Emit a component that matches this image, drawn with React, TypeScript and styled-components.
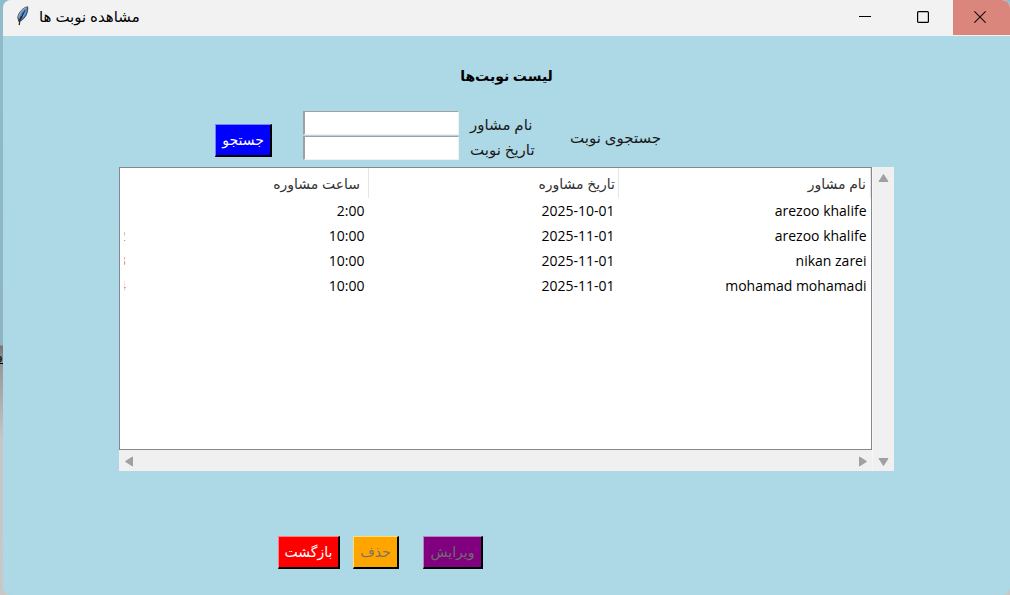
import React from "react";
import styled, { createGlobalStyle } from "styled-components";

const GlobalStyle = createGlobalStyle`
  * { box-sizing: border-box; }
  body {
    margin: 0;
    overflow: hidden;
    font-family: "Open Sans", "DejaVu Sans", sans-serif;
    font-size: 14px;
    line-height: 24px;
    color: #1a1a1a;
  }
`;

const Desktop = styled.div`
  position: relative;
  min-height: 100vh;
  padding-left: 3px;
  display: flex;
  background: linear-gradient(#8fbccb 0, #8fb4c2 345px, #777 346px, #999 366px, #c8c6c6 440px, #c8c8c8 100%);
`;

const Behind = styled.span`
  position: absolute;
  left: 0;
  top: 346px;
  width: 3px;
  height: 18px;
  overflow: hidden;
  direction: rtl;
  line-height: 18px;
  border-bottom: 1px solid #000;
`;

const Window = styled.div`
  flex: 1;
  display: flex;
  flex-direction: column;
  background: #add8e6;
  border-radius: 8px;
  overflow: hidden;
`;

const TitleBar = styled.header`
  height: 36px;
  display: flex;
  background: #f2f2f2;
  color: #000;
`;

const Caption = styled.div`
  flex: 1;
  display: flex;
  align-items: center;
  gap: 8px;
  padding: 0 0 4px 12px;
  font-size: 15px;
`;

const WindowButton = styled.button<{ $close?: boolean }>`
  width: ${(p) => (p.$close ? 57 : 58)}px;
  height: 35px;
  padding: 0 3px 2px 0;
  display: flex;
  align-items: center;
  justify-content: center;
  border: 0;
  background: ${(p) => (p.$close ? "#da867c" : "transparent")};
`;

const Content = styled.main`
  width: 775px;
  max-width: 100%;
  margin: 0 auto;
  display: flex;
  flex-direction: column;
`;

const Heading = styled.h1`
  margin: 28px 0 22px;
  font-size: 14px;
  line-height: 24px;
  font-weight: 700;
  text-align: center;
  color: #000;
`;

const SearchForm = styled.form`
  display: flex;
  align-items: flex-end;
  padding-left: 96px;
  margin-bottom: 7px;
`;

const Fields = styled.div`
  display: grid;
  grid-template-columns: 156px 65px;
  column-gap: 11px;
  row-gap: 1px;
  margin: 1px 35px 0 31px;
`;

const Field = styled.input`
  width: 100%;
  height: 24px;
  padding: 0 4px;
  font: inherit;
  background: #fff;
  border: 2px solid;
  border-color: #a0a0a0 #f0f0f0 #f0f0f0 #a0a0a0;
  border-width: 1px 1px 1px 2px;
  outline: 0;
`;

const FieldLabel = styled.label`
  direction: rtl;
  justify-self: start;
  font-size: 15px;
  line-height: 26px;
  height: 24px;
  white-space: nowrap;
`;

const FormCaption = styled.span`
  font-size: 15px;
  align-self: center;
  padding-top: 4px;
`;

const SubmitSlot = styled.div`
  display: flex;
  padding-bottom: 3px;
`;

const Button = styled.button<{ $bg: string; $fg: string; $edge: string; $width: number }>`
  width: ${(p) => p.$width}px;
  height: 33px;
  padding: 0;
  font: inherit;
  white-space: nowrap;
  color: ${(p) => p.$fg};
  background: ${(p) => p.$bg};
  border: 2px solid;
  border-color: ${(p) => p.$edge} #000 #000 ${(p) => p.$edge};
  border-width: 1px 2px 2px 1px;
`;

const ListBox = styled.section`
  display: grid;
  grid-template-columns: 1fr 21px;
  grid-template-rows: 283px 21px;
  column-gap: 1px;
  background: #f6f6f6;
`;

const Pane = styled.div`
  background: #fff;
  border: 1px solid #828790;
  overflow: hidden;
`;

const Table = styled.table`
  width: 100%;
  table-layout: fixed;
  border-collapse: collapse;
  direction: rtl;
  color: #000;
`;

const HeadCell = styled.th<{ $width: string; $pad?: number }>`
  width: ${(p) => p.$width};
  height: 30px;
  padding: 1px ${(p) => p.$pad ?? 4}px 0 0;
  font-weight: 400;
  text-align: right;
  color: #333;
  border-right: 1px solid #e5e5e5;
`;

const Cell = styled.td`
  height: 25px;
  padding: 0 4px 0 0;
  text-align: right;
  white-space: nowrap;
`;

const IdCell = styled(Cell)`
  padding: 0 0 0 4px;
`;

const IdSliver = styled.span`
  display: block;
  width: 2px;
  height: 24px;
  margin-right: auto;
  overflow: hidden;
  color: #e8963c;
`;

const Track = styled.div<{ $vertical?: boolean }>`
  display: flex;
  flex-direction: ${(p) => (p.$vertical ? "column" : "row")};
  justify-content: space-between;
  align-items: center;
  padding: ${(p) => (p.$vertical ? "6px 0 4px" : "2px 4px 0 5px")};
  grid-row: ${(p) => (p.$vertical ? "1 / 3" : "auto")};
  grid-column: ${(p) => (p.$vertical ? "2" : "1")};
  background: #f0f0f0;
`;

const ArrowButton = styled.button`
  width: 11px;
  height: 11px;
  padding: 0;
  border: 0;
  background: none;
  display: flex;
`;

const Actions = styled.div`
  display: flex;
  padding: 65px 0 26px 159px;
`;

const ActionGap = styled.span<{ $size: number }>`
  width: ${(p) => p.$size}px;
`;

const arrows = {
  up: "M5.5 1.5 10 8.5H1Z",
  down: "M1 2.5H10L5.5 9.5Z",
  left: "M1.5 5.5 8.5 1V10Z",
  right: "M9.5 5.5 2.5 1V10Z",
};

function Arrow({ dir, label }: { dir: keyof typeof arrows; label: string }) {
  return (
    <ArrowButton type="button" aria-label={label}>
      <svg width="11" height="11" viewBox="0 0 11 11">
        <path d={arrows[dir]} fill="#a0a0a0" stroke="#a0a0a0" strokeLinejoin="round" />
      </svg>
    </ArrowButton>
  );
}

function Feather() {
  return (
    <svg width="16" height="20" viewBox="0 0 16 20">
      <path d="M12.5 .8C8 1.6 4 6 2.8 11.2L3.8 15.6C9 13.8 12.6 9 12.8 2Z" fill="#3f7fcc" stroke="#3a434e" strokeWidth="1" />
      <path d="M11.6 1.8C8 3.2 5 7 3.8 11.6" fill="none" stroke="#98a0a8" strokeWidth="1.6" />
      <path d="M10.4 4.5 6.2 12M4.6 14.5 6.6 10.5M7.6 9 8.6 7" fill="none" stroke="#101820" strokeWidth="1.2" />
      <path d="M6.2 10.5 5 14 4.2 19.2" fill="none" stroke="#303030" strokeWidth="1.3" />
      <path d="M11.2 4.5 8 11" fill="none" stroke="#5c9be0" strokeWidth="1.6" />
    </svg>
  );
}

const rows = [
  { id: "1", name: "arezoo khalife", date: "2025-10-01", time: "2:00" },
  { id: "2", name: "arezoo khalife", date: "2025-11-01", time: "10:00" },
  { id: "3", name: "nikan zarei", date: "2025-11-01", time: "10:00" },
  { id: "4", name: "mohamad mohamadi", date: "2025-11-01", time: "10:00" },
];

export default function App() {
  return (
    <Desktop>
      <GlobalStyle />
      <Behind aria-hidden="true">و</Behind>
      <Window>
        <TitleBar>
          <Caption>
            <Feather />
            <span dir="rtl">مشاهده نوبت ها</span>
          </Caption>
          <WindowButton type="button" aria-label="Minimize">
            <svg width="12" height="12" viewBox="0 0 12 12"><path d="M0 5.5H12" stroke="#000" /></svg>
          </WindowButton>
          <WindowButton type="button" aria-label="Maximize">
            <svg width="12" height="12" viewBox="0 0 12 12"><rect x=".6" y=".6" width="10.8" height="10.8" rx="1" fill="none" stroke="#000" strokeWidth="1.2" /></svg>
          </WindowButton>
          <WindowButton type="button" aria-label="Close" $close>
            <svg width="12" height="12" viewBox="0 0 12 12"><path d="M.3.3 11.7 11.7M11.7.3.3 11.7" stroke="#111" strokeWidth="1.1" /></svg>
          </WindowButton>
        </TitleBar>

        <Content>
          <Heading dir="rtl">لیست نوبت‌ها</Heading>

          <SearchForm onSubmit={(e) => e.preventDefault()}>
            <SubmitSlot>
              <Button type="submit" $bg="#0000ff" $fg="#fff" $edge="#8080ff" $width={57}>جستجو</Button>
            </SubmitSlot>
            <Fields>
              <Field id="advisor" dir="rtl" />
              <FieldLabel htmlFor="advisor">نام مشاور</FieldLabel>
              <Field id="date" dir="rtl" />
              <FieldLabel htmlFor="date">تاریخ نوبت</FieldLabel>
            </Fields>
            <FormCaption dir="rtl">جستجوی نوبت</FormCaption>
          </SearchForm>

          <ListBox>
            <Pane>
              <Table>
                <thead>
                  <tr>
                    <HeadCell scope="col" $width="252px">نام مشاور</HeadCell>
                    <HeadCell scope="col" $width="250px" $pad={3}>تاریخ مشاوره</HeadCell>
                    <HeadCell scope="col" $width="auto" $pad={8}>ساعت مشاوره</HeadCell>
                    <td width="8" />
                  </tr>
                </thead>
                <tbody>
                  {rows.map((r) => (
                    <tr key={r.id}>
                      <Cell>{r.name}</Cell>
                      <Cell>{r.date}</Cell>
                      <Cell>{r.time}</Cell>
                      <IdCell><IdSliver>{r.id}</IdSliver></IdCell>
                    </tr>
                  ))}
                </tbody>
              </Table>
            </Pane>
            <Track $vertical>
              <Arrow dir="up" label="Scroll up" />
              <Arrow dir="down" label="Scroll down" />
            </Track>
            <Track>
              <Arrow dir="left" label="Scroll left" />
              <Arrow dir="right" label="Scroll right" />
            </Track>
          </ListBox>

          <Actions>
            <Button type="button" $bg="#ff0000" $fg="#fff" $edge="#ff8080" $width={62}>بازگشت</Button>
            <ActionGap $size={13} />
            <Button type="button" disabled $bg="#ffa500" $fg="#7d7460" $edge="#ffe070" $width={46}>حذف</Button>
            <ActionGap $size={24} />
            <Button type="button" disabled $bg="#800080" $fg="#6d6d6d" $edge="#c080c0" $width={60}>ویرایش</Button>
          </Actions>
        </Content>
      </Window>
    </Desktop>
  );
}
